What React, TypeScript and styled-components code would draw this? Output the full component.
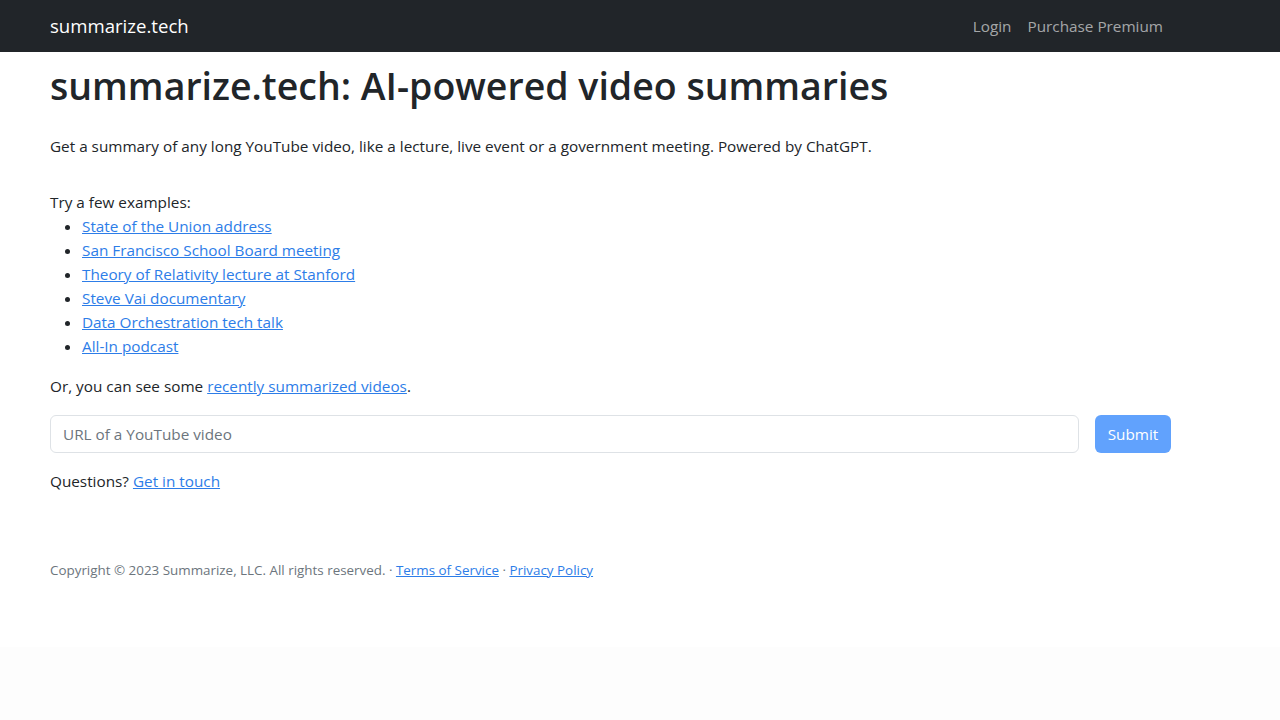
import styled, { createGlobalStyle } from "styled-components";

const GlobalStyle = createGlobalStyle`
  * { box-sizing: border-box; }
  html {
    background: #fdfdfd;
  }
  body {
    margin: 0;
    min-height: 647px;
    font-family: "Open Sans", "Noto Sans", sans-serif;
    font-size: 15.3px;
    line-height: 24px;
    color: #212529;
    background: #fff;
  }
`;

const examples = [
  "State of the Union address",
  "San Francisco School Board meeting",
  "Theory of Relativity lecture at Stanford",
  "Steve Vai documentary",
  "Data Orchestration tech talk",
  "All-In podcast",
];

const App = () => {
  return (
    <>
      <GlobalStyle />
      <NavBar>
        <NavInner>
          <Brand href="#">summarize.tech</Brand>
          <NavLinks>
            <NavLink href="#">Login</NavLink>
            <NavLink href="#">Purchase Premium</NavLink>
          </NavLinks>
        </NavInner>
      </NavBar>
      <Main>
        <Title>summarize.tech: AI-powered video summaries</Title>
        <Lead>
          Get a summary of any long YouTube video, like a lecture, live event or
          a government meeting. Powered by ChatGPT.
        </Lead>
        <Examples>
          Try a few examples:
          <List>
            {examples.map((e) => (
              <li key={e}>
                <Link href="#">{e}</Link>
              </li>
            ))}
          </List>
        </Examples>
        <Text>
          Or, you can see some <Link href="#">recently summarized videos</Link>.
        </Text>
        <Form>
          <UrlInput placeholder="URL of a YouTube video" />
          <SubmitBtn disabled>Submit</SubmitBtn>
        </Form>
        <Text>
          Questions? <Link href="#">Get in touch</Link>
        </Text>
        <Footer>
          Copyright © 2023 Summarize, LLC. All rights reserved. ·{" "}
          <Link href="#">Terms of Service</Link> ·{" "}
          <Link href="#">Privacy Policy</Link>
        </Footer>
      </Main>
    </>
  );
};

export default App;

const NavBar = styled.nav`
  background: #212529;
  height: 52px;
  display: flex;
  align-items: center;
`;

const NavInner = styled.div`
  width: 1121px;
  margin-left: 50px;
  display: flex;
  align-items: center;
  justify-content: space-between;
`;

const Brand = styled.a`
  color: #fff;
  font-size: 18.6px;
  text-decoration: none;
`;

const NavLinks = styled.div`
  display: flex;
  margin-top: -1px;
`;

const NavLink = styled.a`
  color: rgba(255, 255, 255, 0.6);
  text-decoration: none;
  padding: 0 8px;
`;

const Main = styled.main`
  width: 1121px;
  margin-left: 50px;
`;

const Title = styled.h1`
  font-size: 37.5px;
  font-weight: 600;
  line-height: 1.2;
  margin: 11px 0 26px;
`;

const Lead = styled.p`
  margin: 0 0 32px;
`;

const Examples = styled.div`
  margin-bottom: 16px;
`;

const List = styled.ul`
  margin: 0;
  padding-left: 32px;
`;

const Link = styled.a`
  color: #2d7de8;
  text-decoration: underline;
`;

const Text = styled.p`
  margin: 0 0 16px;
`;

const Form = styled.div`
  display: flex;
  gap: 16px;
  margin: 17px 0 16px;
`;

const UrlInput = styled.input`
  flex: 1;
  height: 38px;
  padding: 6px 12px;
  font-family: inherit;
  font-size: 15.3px;
  color: #212529;
  border: 1px solid #dee2e6;
  border-radius: 6px;
  &::placeholder {
    color: #6c757d;
  }
`;

const SubmitBtn = styled.button`
  width: 76px;
  height: 38px;
  font-family: inherit;
  font-size: 15.3px;
  color: #fff;
  background: #61a2fd;
  border: none;
  border-radius: 6px;
`;

const Footer = styled.footer`
  margin-top: 65px;
  font-size: 13.4px;
  color: #6c757d;
`;
